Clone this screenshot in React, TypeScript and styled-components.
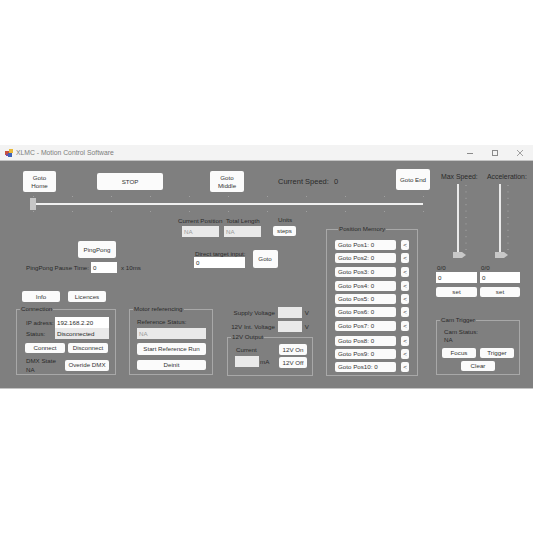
import React from "react";
import styled, { createGlobalStyle } from "styled-components";

const GlobalStyle = createGlobalStyle`
  html, body {
    margin: 0;
    padding: 0;
    background: #ffffff;
  }

  body {
    font-family: "Liberation Sans", Arial, sans-serif;
    font-size: 6.2px;
    color: #2a2a2a;
  }
`;

const Page = styled.div`
  width: 533px;
  height: 533px;
  padding-top: 145px;
  box-sizing: border-box;
  overflow: hidden;
`;

const TitleBar = styled.div`
  height: 15px;
  background: #f3f3f3;
  display: flex;
  align-items: center;
  padding-left: 5px;
`;

const TitleText = styled.span`
  margin-left: 3px;
  font-size: 6.8px;
  color: #7c7c7c;
`;

const WindowControls = styled.div`
  margin-left: auto;
  display: flex;
  align-items: center;
  padding-right: 10px;
  gap: 19px;
`;

const Client = styled.div`
  height: 227px;
  display: flex;
  background: #7f7f7f;
  border-top: 1px solid #c4c4c4;
  border-bottom: 1px solid #c4c4c4;
`;

const LeftArea = styled.div`
  width: 430px;
  flex: none;
  display: flex;
  flex-direction: column;
`;

const TopBar = styled.div`
  display: flex;
  align-items: flex-start;
  box-sizing: border-box;
  height: 35px;
  padding: 10px 0 0 23px;
`;

const Button = styled.button<{ $w: number; $h?: number }>`
  width: ${(p) => p.$w}px;
  height: ${(p) => p.$h ?? 11}px;
  flex: none;
  padding: 0;
  border: 0;
  border-radius: 2px;
  background: #fbfbfb;
  font-family: inherit;
  font-size: 6.2px;
  line-height: 7.5px;
  color: #333333;
  text-align: center;
  white-space: nowrap;
`;

const StopButton = styled(Button)`
  margin: 2px 0 0 41px;
`;

const MiddleButton = styled(Button)`
  margin: 0 0 0 47px;
`;

const GotoEndButton = styled(Button)`
  margin: -2px 0 0 auto;
`;

const SpeedText = styled.div`
  margin: 6px 0 0 34px;
  font-size: 7.5px;
  display: flex;
  gap: 5px;
`;

const SliderArea = styled.svg`
  display: block;
  margin-left: 30px;
  flex: none;
`;

const Lower = styled.div`
  display: flex;
  align-items: flex-start;
  margin-top: 2px;
`;

const LeftBlock = styled.div`
  width: 326px;
  flex: none;
  display: flex;
  flex-direction: column;
`;

const UpperLeft = styled.div`
  display: flex;
  height: 76px;
`;

const PingColumn = styled.div`
  width: 152px;
  flex: none;
  margin-left: 26px;
  padding-top: 26px;
  display: flex;
  flex-direction: column;
`;

const PingButton = styled(Button)`
  margin-left: 52px;
`;

const PauseRow = styled.div`
  display: flex;
  align-items: center;
  margin-top: 4px;
  white-space: nowrap;
`;

const PauseLabel = styled.span`
  width: 65px;
`;

const TextField = styled.div<{ $w: number; $h?: number; $off?: boolean }>`
  width: ${(p) => p.$w}px;
  height: ${(p) => p.$h ?? 11}px;
  flex: none;
  box-sizing: border-box;
  padding-left: 2px;
  line-height: ${(p) => p.$h ?? 11}px;
  background: ${(p) => (p.$off ? "#e9e9e9" : "#ffffff")};
  color: ${(p) => (p.$off ? "#9a9a9a" : "#2a2a2a")};
  white-space: nowrap;
  overflow: hidden;
`;

const StatusField = styled(TextField)`
  color: #2a2a2a;
`;

const PauseUnit = styled.span`
  margin-left: 4px;
`;

const TargetColumn = styled.div`
  display: flex;
  flex-direction: column;
`;

const ReadoutRow = styled.div`
  display: flex;
  align-items: flex-start;
  margin-top: 2px;
`;

const Readout = styled.div<{ $w: number; $inset?: number }>`
  width: ${(p) => p.$w}px;
  display: flex;
  flex-direction: column;
  padding-left: ${(p) => p.$inset ?? 0}px;
  box-sizing: border-box;
  line-height: 8px;
  white-space: nowrap;
`;

const ReadoutLabel = styled.span<{ $shift?: number }>`
  margin-left: ${(p) => p.$shift ?? 0}px;
  height: 9px;
`;

const UnitsColumn = styled.div`
  display: flex;
  flex-direction: column;
  margin-left: 12px;
  margin-top: -1px;
  line-height: 8px;
`;

const UnitsLabel = styled.span`
  margin-left: 5px;
  height: 10px;
`;

const TargetRow = styled.div`
  display: flex;
  margin: 13px 0 0 16px;
  gap: 7px;
`;

const TargetInput = styled.div`
  display: flex;
  flex-direction: column;
  line-height: 7px;
  white-space: nowrap;
`;

const TargetLabel = styled.span`
  margin-left: 1px;
  height: 7px;
`;

const InfoRow = styled.div`
  display: flex;
  gap: 8px;
  padding-left: 22px;
`;

const PanelRow = styled.div`
  display: flex;
  align-items: flex-start;
  margin-top: 3px;
  padding-left: 16px;
`;

const Group = styled.fieldset<{ $w: number; $h: number }>`
  width: ${(p) => p.$w}px;
  height: ${(p) => p.$h}px;
  flex: none;
  box-sizing: border-box;
  margin: 0;
  padding: 0;
  border: 1px solid #a8a8a8;
  min-width: 0;
  display: flex;
  flex-direction: column;
`;

const Legend = styled.legend`
  margin-left: 3px;
  padding: 0 1px;
  font-size: 6.2px;
  line-height: 8px;
  white-space: nowrap;
`;

const ConnectionBody = styled.div`
  display: flex;
  flex-direction: column;
  padding: 4px 0 0 8px;
`;

const FieldRow = styled.div`
  display: flex;
  align-items: center;
  white-space: nowrap;
`;

const FieldLabel = styled.span`
  width: 29px;
  margin-left: 1px;
`;

const ConnectRow = styled.div`
  display: flex;
  gap: 3px;
  margin-top: 4px;
`;

const DmxRow = styled.div`
  display: flex;
  margin-top: 3px;
  align-items: center;
`;

const DmxState = styled.div`
  width: 39px;
  margin-left: 1px;
  line-height: 9px;
`;

const MotorGroup = styled(Group)`
  margin-left: 13px;
`;

const MotorBody = styled.div`
  display: flex;
  flex-direction: column;
  padding: 5px 0 0 7px;
  gap: 2px;
  line-height: 8px;
`;

const StartButton = styled(Button)`
  margin-top: 2px;
`;

const DeinitButton = styled(Button)`
  margin-top: 3px;
`;

const PowerColumn = styled.div`
  margin-left: 14px;
  margin-top: 2px;
  display: flex;
  flex-direction: column;
`;

const VoltageRow = styled.div`
  display: flex;
  align-items: center;
  justify-content: flex-end;
  width: 82px;
  margin-bottom: 3px;
  white-space: nowrap;
`;

const VoltageField = styled(TextField)`
  margin: 0 3px;
`;

const OutputGroup = styled(Group)`
  margin-top: -2px;
`;

const OutputBody = styled.div`
  display: flex;
  justify-content: space-between;
  padding: 3px 5px 0 8px;
`;

const OutputLeft = styled.div`
  display: flex;
  flex-direction: column;
  padding-top: 2px;
  gap: 2px;
  line-height: 8px;
`;

const CurrentField = styled.div`
  display: flex;
  align-items: center;
  gap: 1px;
  margin-left: -1px;
`;

const OutputButtons = styled.div`
  display: flex;
  flex-direction: column;
  gap: 2px;
`;

const MemoryGroup = styled(Group)`
  margin-top: 10px;
  padding: 7px 0 0 8px;
`;

const MemoryRow = styled.div<{ $gap: number }>`
  display: flex;
  gap: 5px;
  margin-bottom: ${(p) => p.$gap}px;
`;

const MemoryButton = styled(Button)`
  text-align: left;
  padding-left: 3px;
`;

const RightArea = styled.div`
  flex: 1;
  display: flex;
  flex-direction: column;
  padding: 11px 0 0 6px;
`;

const SpeedColumns = styled.div`
  display: flex;
  gap: 3px;
`;

const SpeedColumn = styled.div`
  width: 41px;
  display: flex;
  flex-direction: column;
  white-space: nowrap;
`;

const SpeedTitle = styled.span<{ $shift: number }>`
  font-size: 6.9px;
  line-height: 9px;
  margin-left: ${(p) => p.$shift}px;
`;

const SideSliderArt = styled.svg<{ $shift: number }>`
  display: block;
  margin: 1px 0 0 ${(p) => p.$shift}px;
`;

const Ratio = styled.span`
  margin: 4px 0 0 1px;
  line-height: 8px;
`;

const SetButton = styled(Button)`
  margin-top: 4px;
`;

const CamGroup = styled(Group)`
  margin-top: 19px;
`;

const CamBody = styled.div`
  display: flex;
  flex-direction: column;
  padding: 4px 0 0 7px;
  line-height: 8px;
`;

const CamButtons = styled.div`
  display: flex;
  gap: 4px;
  margin: 4px 0 0 -2px;
`;

const ClearButton = styled(Button)`
  margin: 3px 0 0 17px;
`;

const sliderTicks = Array.from({ length: 11 }, (_, i) => 3 + i * 39);
const sideTicks = Array.from({ length: 11 }, (_, i) => 3 + i * 6.4);

const memoryGaps = [3, 4, 4, 3, 3, 4, 5, 3, 3, 0];

const AppIcon = () => (
  <svg width="8" height="8" viewBox="0 0 8 8">
    <rect x="0" y="2" width="4" height="4" fill="#c8503c" />
    <rect x="4" y="0" width="4" height="4" fill="#e8b93a" />
    <rect x="3" y="4" width="4" height="4" fill="#3d63b8" />
    <rect x="1" y="5" width="2" height="2" fill="#7d4aa0" />
  </svg>
);

const MainSlider = () => (
  <SliderArea width="396" height="17" viewBox="0 0 396 17">
    {sliderTicks.map((x) => (
      <g key={x} fill="#a0a0a0">
        <rect x={x} y="0" width="1" height="1" />
        <rect x={x} y="15" width="1" height="1" />
      </g>
    ))}
    <rect x="3" y="7" width="390" height="2" fill="#f0f0f0" />
    <rect x="0" y="2" width="6" height="12" fill="#c6c6c6" />
  </SliderArea>
);

const SideSlider: React.FC<{ shift: number }> = ({ shift }) => (
  <SideSliderArt $shift={shift} width="30" height="78" viewBox="0 0 30 78">
    <rect x="9" y="2" width="2" height="72" fill="#eaeaea" />
    {sideTicks.map((y) => (
      <rect key={y} x="17" y={y} width="2" height="1" fill="#949494" />
    ))}
    <path d="M5 70 H14 L18 73 L14 76 H5 Z" fill="#c8c8c8" />
  </SideSliderArt>
);

const App: React.FC = () => {
  return (
    <Page>
      <GlobalStyle />
      <TitleBar>
        <AppIcon />
        <TitleText>XLMC - Motion Control Software</TitleText>
        <WindowControls>
          <svg width="6" height="6" viewBox="0 0 6 6">
            <rect x="0" y="3" width="6" height="1" fill="#8a8a8a" />
          </svg>
          <svg width="6" height="6" viewBox="0 0 6 6">
            <rect x="0.5" y="0.5" width="5" height="5" fill="none" stroke="#8a8a8a" />
          </svg>
          <svg width="6" height="6" viewBox="0 0 6 6">
            <path d="M0 0 L6 6 M6 0 L0 6" stroke="#8a8a8a" strokeWidth="0.8" />
          </svg>
        </WindowControls>
      </TitleBar>
      <Client>
        <LeftArea>
          <TopBar>
            <Button $w={33} $h={21}>Goto<br />Home</Button>
            <StopButton $w={66} $h={17}>STOP</StopButton>
            <MiddleButton $w={34} $h={21}>Goto<br />Middle</MiddleButton>
            <SpeedText>
              <span>Current Speed:</span>
              <span>0</span>
            </SpeedText>
            <GotoEndButton $w={34} $h={21}>Goto End</GotoEndButton>
          </TopBar>
          <MainSlider />
          <Lower>
            <LeftBlock>
              <UpperLeft>
                <PingColumn>
                  <PingButton $w={38} $h={17}>PingPong</PingButton>
                  <PauseRow>
                    <PauseLabel>PingPong Pause Time:</PauseLabel>
                    <TextField $w={26}>0</TextField>
                    <PauseUnit>x 10ms</PauseUnit>
                  </PauseRow>
                </PingColumn>
                <TargetColumn>
                  <ReadoutRow>
                    <Readout $w={46} $inset={4}>
                      <ReadoutLabel $shift={-4}>Current Position</ReadoutLabel>
                      <TextField $w={37} $off>NA</TextField>
                    </Readout>
                    <Readout $w={37}>
                      <ReadoutLabel $shift={2}>Total Length</ReadoutLabel>
                      <TextField $w={37} $off>NA</TextField>
                    </Readout>
                    <UnitsColumn>
                      <UnitsLabel>Units</UnitsLabel>
                      <Button $w={23} $h={10}>steps</Button>
                    </UnitsColumn>
                  </ReadoutRow>
                  <TargetRow>
                    <TargetInput>
                      <TargetLabel>Direct target input:</TargetLabel>
                      <TextField $w={51}>0</TextField>
                    </TargetInput>
                    <Button $w={25} $h={18}>Goto</Button>
                  </TargetRow>
                </TargetColumn>
              </UpperLeft>
              <InfoRow>
                <Button $w={38}>Info</Button>
                <Button $w={38}>Licences</Button>
              </InfoRow>
              <PanelRow>
                <Group $w={100} $h={70}>
                  <Legend>Connection</Legend>
                  <ConnectionBody>
                    <FieldRow>
                      <FieldLabel>IP adress:</FieldLabel>
                      <TextField $w={54}>192.168.2.20</TextField>
                    </FieldRow>
                    <FieldRow>
                      <FieldLabel>Status:</FieldLabel>
                      <StatusField $w={54} $off>Disconnected</StatusField>
                    </FieldRow>
                    <ConnectRow>
                      <Button $w={40} $h={10}>Connect</Button>
                      <Button $w={40} $h={10}>Disconnect</Button>
                    </ConnectRow>
                    <DmxRow>
                      <DmxState>DMX State<br />NA</DmxState>
                      <Button $w={44}>Overide DMX</Button>
                    </DmxRow>
                  </ConnectionBody>
                </Group>
                <MotorGroup $w={84} $h={70}>
                  <Legend>Motor referencing</Legend>
                  <MotorBody>
                    <span>Reference Status:</span>
                    <TextField $w={69} $off>NA</TextField>
                    <StartButton $w={69} $h={12}>Start Reference Run</StartButton>
                    <DeinitButton $w={69} $h={10}>Deinit</DeinitButton>
                  </MotorBody>
                </MotorGroup>
                <PowerColumn>
                  <VoltageRow>
                    Supply Voltage
                    <VoltageField $w={24} $off />
                    V
                  </VoltageRow>
                  <VoltageRow>
                    12V Int. Voltage
                    <VoltageField $w={24} $off />
                    V
                  </VoltageRow>
                  <OutputGroup $w={86} $h={43}>
                    <Legend>12V Output</Legend>
                    <OutputBody>
                      <OutputLeft>
                        <span>Current</span>
                        <CurrentField>
                          <TextField $w={24} $off />
                          mA
                        </CurrentField>
                      </OutputLeft>
                      <OutputButtons>
                        <Button $w={28}>12V On</Button>
                        <Button $w={28}>12V Off</Button>
                      </OutputButtons>
                    </OutputBody>
                  </OutputGroup>
                </PowerColumn>
              </PanelRow>
            </LeftBlock>
            <MemoryGroup $w={92} $h={151}>
              <Legend>Position Memory</Legend>
              {memoryGaps.map((gap, i) => (
                <MemoryRow key={i} $gap={gap}>
                  <MemoryButton $w={61} $h={10}>Goto Pos{i + 1}: 0</MemoryButton>
                  <Button $w={8} $h={10}>&lt;</Button>
                </MemoryRow>
              ))}
            </MemoryGroup>
          </Lower>
        </LeftArea>
        <RightArea>
          <SpeedColumns>
            <SpeedColumn>
              <SpeedTitle $shift={5}>Max Speed:</SpeedTitle>
              <SideSlider shift={12} />
              <Ratio>0/0</Ratio>
              <TextField $w={41}>0</TextField>
              <SetButton $w={41} $h={10}>set</SetButton>
            </SpeedColumn>
            <SpeedColumn>
              <SpeedTitle $shift={7}>Acceleration:</SpeedTitle>
              <SideSlider shift={10} />
              <Ratio>0/0</Ratio>
              <TextField $w={40}>0</TextField>
              <SetButton $w={40} $h={10}>set</SetButton>
            </SpeedColumn>
          </SpeedColumns>
          <CamGroup $w={84} $h={59}>
            <Legend>Cam Trigger</Legend>
            <CamBody>
              <span>Cam Status:</span>
              <span>NA</span>
              <CamButtons>
                <Button $w={34} $h={10}>Focus</Button>
                <Button $w={34} $h={10}>Trigger</Button>
              </CamButtons>
              <ClearButton $w={34} $h={10}>Clear</ClearButton>
            </CamBody>
          </CamGroup>
        </RightArea>
      </Client>
    </Page>
  );
};

export default App;
